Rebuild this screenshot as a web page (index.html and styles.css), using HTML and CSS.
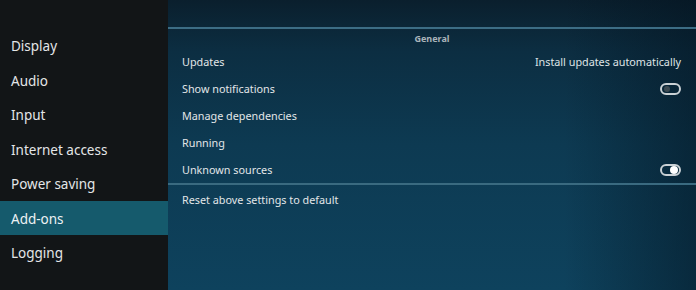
FILE: index.html
```html
<!DOCTYPE html>
<html>
<head>
<meta charset="utf-8">
<link rel="stylesheet" href="styles.css">
</head>
<body>
<div class="app">
  <nav class="sidebar">
    <div class="nav-item">Display</div>
    <div class="nav-item">Audio</div>
    <div class="nav-item">Input</div>
    <div class="nav-item">Internet access</div>
    <div class="nav-item">Power saving</div>
    <div class="nav-item active">Add-ons</div>
    <div class="nav-item">Logging</div>
  </nav>
  <main class="content">
    <div class="header-line"></div>
    <div class="group-title">General</div>
    <div class="row"><span>Updates</span><span class="value">Install updates automatically</span></div>
    <div class="row"><span>Show notifications</span><span class="toggle"><span class="knob"></span></span></div>
    <div class="row"><span>Manage dependencies</span></div>
    <div class="row"><span>Running</span></div>
    <div class="row"><span>Unknown sources</span><span class="toggle on"><span class="knob"></span></span></div>
    <div class="divider"></div>
    <div class="row reset"><span>Reset above settings to default</span></div>
  </main>
</div>
</body>
</html>
```

FILE: styles.css
```css
* { box-sizing: border-box; }
html, body { margin: 0; padding: 0; }
body {
  width: 696px;
  height: 290px;
  overflow: hidden;
  font-family: "Noto Sans", "Open Sans", sans-serif;
  background: #111416;
}
.app {
  display: flex;
  height: 290px;
}
.sidebar {
  width: 168px;
  flex: none;
  background: #121517;
  padding-top: 28px;
  display: flex;
  flex-direction: column;
}
.nav-item {
  height: 34.5px;
  line-height: 34px;
  padding-top: 1px;
  padding-left: 11px;
  font-size: 13.5px;
  color: #e4e6e8;
}
.nav-item.active {
  background: #155a6c;
  color: #eef2f4;
}
.content {
  flex: 1;
  display: flex;
  flex-direction: column;
  background:
    linear-gradient(to right, rgba(0,0,0,0) 0%, rgba(0,0,0,0) 75%, rgba(3,18,30,0.5) 100%),
    linear-gradient(to bottom, #0a1f2d 0%, #0c2e42 18%, #0d3a52 50%, #0e425d 100%);
}
.header-line {
  height: 2px;
  margin-top: 27px;
  background: #3c6d85;
}
.group-title {
  text-align: center;
  font-size: 9px;
  font-weight: bold;
  color: #aab4ba;
  margin-top: 2px;
  height: 17px;
  line-height: 15px;
}
.row {
  display: flex;
  justify-content: space-between;
  align-items: center;
  height: 27px;
  padding: 0 15px 0 14px;
  font-size: 10.8px;
  color: #e2e6e8;
}
.value { color: #dfe4e6; }
.toggle {
  position: relative;
  width: 21px;
  height: 12px;
  border: 2px solid #c9d0d4;
  border-radius: 6px;
}
.knob {
  position: absolute;
  top: 1px;
  left: 2px;
  width: 6px;
  height: 6px;
  border-radius: 50%;
  background: #3c4a52;
}
.toggle.on .knob {
  left: auto;
  right: 1px;
  top: 0;
  width: 8px;
  height: 8px;
  background: #ffffff;
}
.divider {
  height: 2px;
  background: #3a6a80;
}
.reset { height: 28px; }
```
